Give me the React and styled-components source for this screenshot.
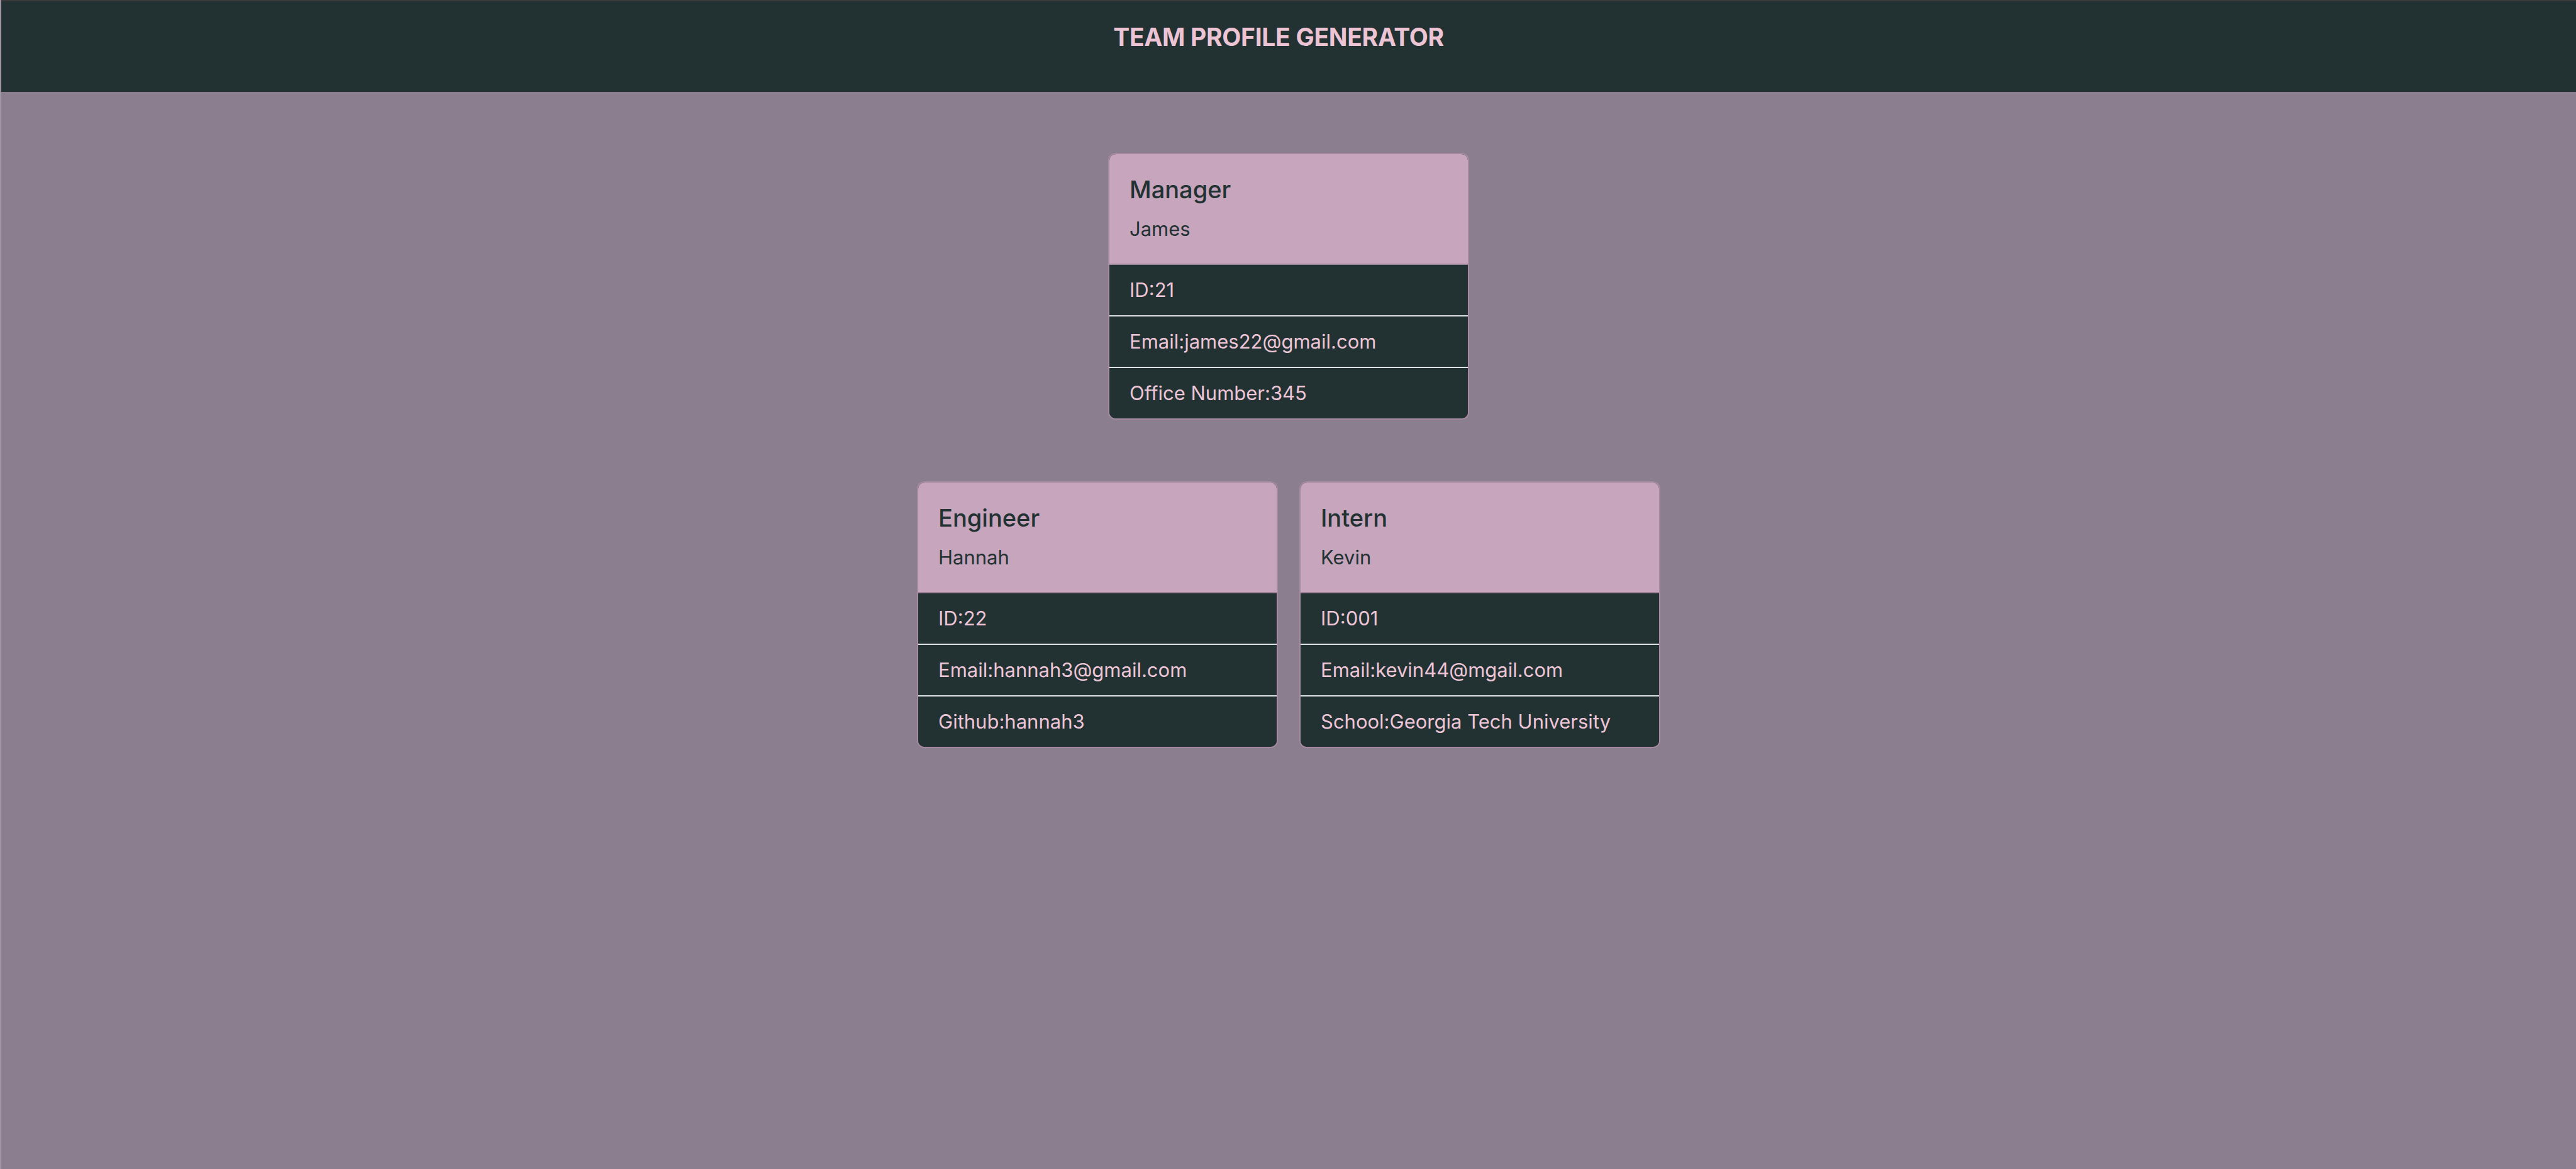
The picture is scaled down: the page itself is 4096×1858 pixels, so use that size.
import React from "react";
import styled, { createGlobalStyle } from "styled-components";

const GlobalStyle = createGlobalStyle`
  html, body {
    margin: 0;
    padding: 0;
    background: #8a7e8f;
  }
  * { box-sizing: border-box; }
`;

const Page = styled.div`
  min-height: 100vh;
  background: #8a7e8f;
  border-left: 2px solid rgba(255, 255, 255, 0.18);
  font-family: Inter, "Noto Sans", "Liberation Sans", sans-serif;
`;

const Header = styled.header`
  height: 146px;
  border-top: 2px solid #3a3a3b;
  background: #223132;
  padding-top: 33px;
  padding-right: 32px;
  text-align: center;
`;

const Title = styled.h1`
  margin: 0;
  font-size: 39px;
  line-height: 48px;
  font-weight: 700;
  color: #ecc4d4;
  letter-spacing: -0.3px;
`;

const Main = styled.main`
  display: flex;
  flex-direction: column;
  align-items: center;
  gap: 98px;
  padding-top: 97px;
`;

const Row = styled.div`
  display: flex;
  justify-content: center;
  gap: 34px;
`;

const Card = styled.section`
  width: 574px;
  border: 2px solid #a68aa2;
  border-radius: 12px;
  overflow: hidden;
  background: #223132;
`;

const CardHead = styled.div`
  background: #c7a5bd;
  padding: 32px 32px 36px;
  border-bottom: 2px solid #9e8599;
`;

const Role = styled.h2`
  margin: 0 0 20px;
  font-size: 38px;
  line-height: 48px;
  font-weight: 500;
  color: #223132;
`;

const Name = styled.h3`
  margin: 0;
  font-size: 31px;
  line-height: 38px;
  font-weight: 400;
  color: #223132;
`;

const List = styled.ul`
  margin: 0;
  padding: 0;
  list-style: none;
`;

const Item = styled.li`
  padding: 16px 32px;
  font-size: 31px;
  line-height: 48px;
  color: #ecc6d6;
  background: #223132;
  & + & {
    border-top: 2px solid #dee2e6;
  }
`;

const ProfileCard = ({ role, name, items }) => (
  <Card>
    <CardHead>
      <Role>{role}</Role>
      <Name>{name}</Name>
    </CardHead>
    <List>
      {items.map((t) => (
        <Item key={t}>{t}</Item>
      ))}
    </List>
  </Card>
);

export default function App() {
  return (
    <>
      <GlobalStyle />
      <Page>
        <Header>
          <Title>TEAM PROFILE GENERATOR</Title>
        </Header>
        <Main>
          <Row>
            <ProfileCard
              role="Manager"
              name="James"
              items={["ID:21", "Email:james22@gmail.com", "Office Number:345"]}
            />
          </Row>
          <Row>
            <ProfileCard
              role="Engineer"
              name="Hannah"
              items={["ID:22", "Email:hannah3@gmail.com", "Github:hannah3"]}
            />
            <ProfileCard
              role="Intern"
              name="Kevin"
              items={["ID:001", "Email:kevin44@mgail.com", "School:Georgia Tech University"]}
            />
          </Row>
        </Main>
      </Page>
    </>
  );
}
